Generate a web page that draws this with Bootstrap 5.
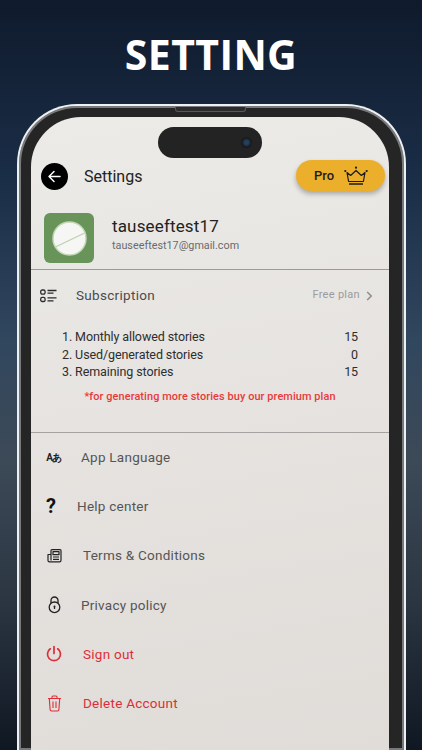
<!DOCTYPE html>
<html lang="en">
<head>
<meta charset="utf-8">
<title>Setting</title>
<link href="https://cdn.jsdelivr.net/npm/bootstrap@5.3.0/dist/css/bootstrap.min.css" rel="stylesheet">
<style>
html,body{height:750px;overflow:hidden}
body{width:422px;background:linear-gradient(180deg,#0f1a2c 0,#1b2f49 190px,#31475e 340px,#3c4957 460px,#2b3642 600px,#0f1722 750px);font-family:Roboto,"Open Sans",sans-serif;color:#222}
.shot-title{height:104px;padding-top:28px;margin:0;font:700 41px/52px "Open Sans",sans-serif;letter-spacing:.4px;color:#fff;text-align:center}
.phone-frame{position:relative;width:389px;height:646px;margin-left:17px;padding:11px 15px 0 12px;background:#252525;border:2px solid #eef0f2;border-bottom:0;border-radius:60px 60px 0 0;box-shadow:inset 0 0 0 2px #77797c}
.phone-screen{height:100%;border-radius:50px 50px 0 0;background:linear-gradient(170deg,#ecebe8 0,#e6e3e0 45%,#e0dcd8 100%);padding-top:41px}
.ear-piece{position:absolute;left:156px;top:1px;width:71px;height:5px;background:#2c2c2c;border:1px solid #55575a;border-top:0;border-radius:0 0 3px 3px}
.island{position:absolute;left:139px;top:21px;width:104px;height:31px;border-radius:16px;background:#232323}
.island-lens{position:absolute;right:10px;top:10px;width:11px;height:11px;border-radius:50%;background:radial-gradient(circle,#24405e 0 25%,#17191c 60%)}
.top-row{height:36px;padding:0 4px 0 10px}
.back-btn{width:27px;height:27px;background:#000;border-radius:50%}
.top-title{font-size:16px;margin-left:16px;color:#222;padding-top:1px}
.pro-pill{width:89px;height:31px;background:#ecaf2b;border-radius:16px;box-shadow:0 3px 5px rgba(0,0,0,.28);font-size:13px;font-weight:500;color:#1b1b1b;padding-left:18px;gap:10px;margin-top:-1px}
.profile-row{height:76px;padding:13px 0 0 13px;border-bottom:1px solid #9a9a9a}
.avatar-box{width:50px;height:50px;background:#68945a;border-radius:6px}
.avatar-text{margin-left:18px;padding-bottom:7px}
.user-name{font-size:17px;line-height:22px;letter-spacing:.15px;color:#222}
.user-mail{font-size:10.8px;line-height:17px;color:#6a6a6c}
.sub-row{height:51px;padding:0 16px 0 9px}
.sub-label{font-size:13.5px;letter-spacing:.3px;color:#4b4b4b;margin-left:19px}
.plan-label{font-size:11px;letter-spacing:.3px;color:#9b9b9e}
.stats{padding:0 31px;font-size:12.5px;line-height:17.5px;letter-spacing:-.1px;color:#2e2e2e;margin-top:7px}
.promo-note{font-size:10.9px;font-weight:500;color:#e8393a;text-align:center;margin-top:8.5px;height:36.5px;letter-spacing:.1px;line-height:16px}
.menu-wrap{border-top:1.5px solid #a4a3a1;margin-top:6px}
.menu-line{height:49.2px;padding-left:15px;font-size:13.5px;letter-spacing:.25px;color:#555}
.menu-line svg{flex:none}
.ico-cell{width:16px;display:flex;justify-content:center}
.gap-a{margin-left:19px}.gap-b{margin-left:15px}.gap-c{margin-left:21px}
.danger-line{color:#dc2e38}
.q-mark{font-weight:700;font-size:20px;line-height:1;color:#111;padding-right:6px}
.lang-mark{font-size:10px;font-weight:700;color:#222;letter-spacing:-.5px;white-space:nowrap}
.plan-wrap{gap:6px}
</style>
</head>
<body>
<h1 class="shot-title">SETTING</h1>
<div class="phone-frame">
  <div class="ear-piece"></div>
  <div class="island"><div class="island-lens"></div></div>
  <div class="phone-screen d-flex flex-column">
    <div class="top-row d-flex align-items-center justify-content-between">
      <div class="d-flex align-items-center">
        <div class="back-btn d-flex align-items-center justify-content-center">
          <svg width="15" height="15" viewBox="0 0 15 15" fill="none" stroke="#fff" stroke-width="1.5" stroke-linecap="round" stroke-linejoin="round"><path d="M13 7.5H2M7 2.5l-5 5 5 5"/></svg>
        </div>
        <div class="top-title">Settings</div>
      </div>
      <div class="pro-pill d-flex align-items-center">
        <span>Pro</span>
        <svg width="24" height="20" viewBox="0 0 24 20" fill="none" stroke="#1b1b1b" stroke-width="1.2" stroke-linejoin="round"><path d="M3 6.5l3.6 3L12 4.5l5.4 5 3.6-3-1.6 9H4.6z"/><path d="M5 18h14" stroke-width="1.5"/><g fill="#1b1b1b" stroke="none"><circle cx="12" cy="1.7" r="1.1"/><circle cx="1.3" cy="5" r="1.1"/><circle cx="22.7" cy="5" r="1.1"/></g></svg>
      </div>
    </div>
    <div class="profile-row d-flex align-items-center">
      <div class="avatar-box d-flex align-items-center justify-content-center">
        <svg width="35" height="35" viewBox="0 0 36 36"><circle cx="18" cy="18" r="17" fill="#f6f6f5" stroke="#c3d6b7" stroke-width="1.5"/><path d="M4 26.5L33 12.5" stroke="#bcd0ae" stroke-width="1.2"/></svg>
      </div>
      <div class="avatar-text">
        <div class="user-name">tauseeftest17</div>
        <div class="user-mail">tauseeftest17@gmail.com</div>
      </div>
    </div>
    <div class="sub-row d-flex align-items-center justify-content-between">
      <div class="d-flex align-items-center">
        <svg width="17" height="14" viewBox="0 0 17 14" fill="none" stroke="#2a2a2a" stroke-width="1.3"><rect x=".7" y="1" width="4.4" height="4.2" rx="1.6"/><rect x=".7" y="8.3" width="4.4" height="4.2" rx="1.6"/><path d="M7.5 1.5h9M7.5 4.2h6M7.5 8.9h9M7.5 11.8h6"/></svg>
        <span class="sub-label">Subscription</span>
      </div>
      <div class="d-flex align-items-center plan-wrap">
        <span class="plan-label">Free plan</span>
        <svg width="7" height="10" viewBox="0 0 7 10" fill="none" stroke="#8f8f92" stroke-width="1.6"><path d="M1.2 1l4 4-4 4"/></svg>
      </div>
    </div>
    <div class="stats">
      <div class="d-flex justify-content-between"><span>1. Monthly allowed stories</span><span>15</span></div>
      <div class="d-flex justify-content-between"><span>2. Used/generated stories</span><span>0</span></div>
      <div class="d-flex justify-content-between"><span>3. Remaining stories</span><span>15</span></div>
    </div>
    <div class="promo-note">*for generating more stories buy our premium plan</div>
    <div class="menu-wrap">
      <div class="menu-line d-flex align-items-center">
        <span class="ico-cell lang-mark">A<span>あ</span></span>
        <span class="gap-a">App Language</span>
      </div>
      <div class="menu-line d-flex align-items-center">
        <span class="ico-cell q-mark">?</span>
        <span class="gap-b">Help center</span>
      </div>
      <div class="menu-line d-flex align-items-center">
        <span class="ico-cell"><svg width="15" height="15" viewBox="0 0 15 15" fill="none" stroke="#222" stroke-width="1.2" stroke-linejoin="round"><path d="M4 12.5V2.6c0-.6.4-1 1-1h8c.6 0 1 .4 1 1v9.6c0 .9-.6 1.6-1.5 1.6H2.400C1.500 13.800 1 13.200 1 12.400V6.500h3"/><rect x="6" y="3.700" width="6" height="3"/><path d="M6 9h6M6 11.300h6"/></svg></span>
        <span class="gap-c">Terms &amp; Conditions</span>
      </div>
      <div class="menu-line d-flex align-items-center">
        <span class="ico-cell"><svg width="15" height="18" viewBox="0 0 15 18" fill="none" stroke="#222" stroke-width="1.300"><path d="M4 7V4.500a3.500 3.500 0 0 1 7 0V7"/><circle cx="7.500" cy="11.300" r="5.300"/><circle cx="7.500" cy="10.500" r="1" fill="#222" stroke="none"/><path d="M7.500 11v2"/></svg></span>
        <span class="gap-a">Privacy policy</span>
      </div>
      <div class="menu-line d-flex align-items-center danger-line">
        <span class="ico-cell"><svg width="16" height="17" viewBox="0 0 16 17" fill="none" stroke="#dc2e38" stroke-width="1.700" stroke-linecap="round"><path d="M8 1.500v7M4.300 3.800a6.500 6.500 0 1 0 7.400 0"/></svg></span>
        <span class="gap-c">Sign out</span>
      </div>
      <div class="menu-line d-flex align-items-center danger-line">
        <span class="ico-cell"><svg width="15" height="17" viewBox="0 0 15 17" fill="none" stroke="#dc2e38" stroke-width="1.100" stroke-linejoin="round"><path d="M1 3.500h13M5 3.500V2c0-.5.400-1 1-1h3c.6 0 1 .500 1 1v1.500M2.300 3.500l.8 11c0 .8.600 1.500 1.500 1.500h5.800c.9 0 1.500-.7 1.500-1.500l.8-11M6 6.500v6.500M9 6.500v6.500"/></svg></span>
        <span class="gap-c">Delete Account</span>
      </div>
    </div>
  </div>
</div>
<script src="https://cdn.jsdelivr.net/npm/bootstrap@5.3.0/dist/js/bootstrap.bundle.min.js"></script>
</body>
</html>
